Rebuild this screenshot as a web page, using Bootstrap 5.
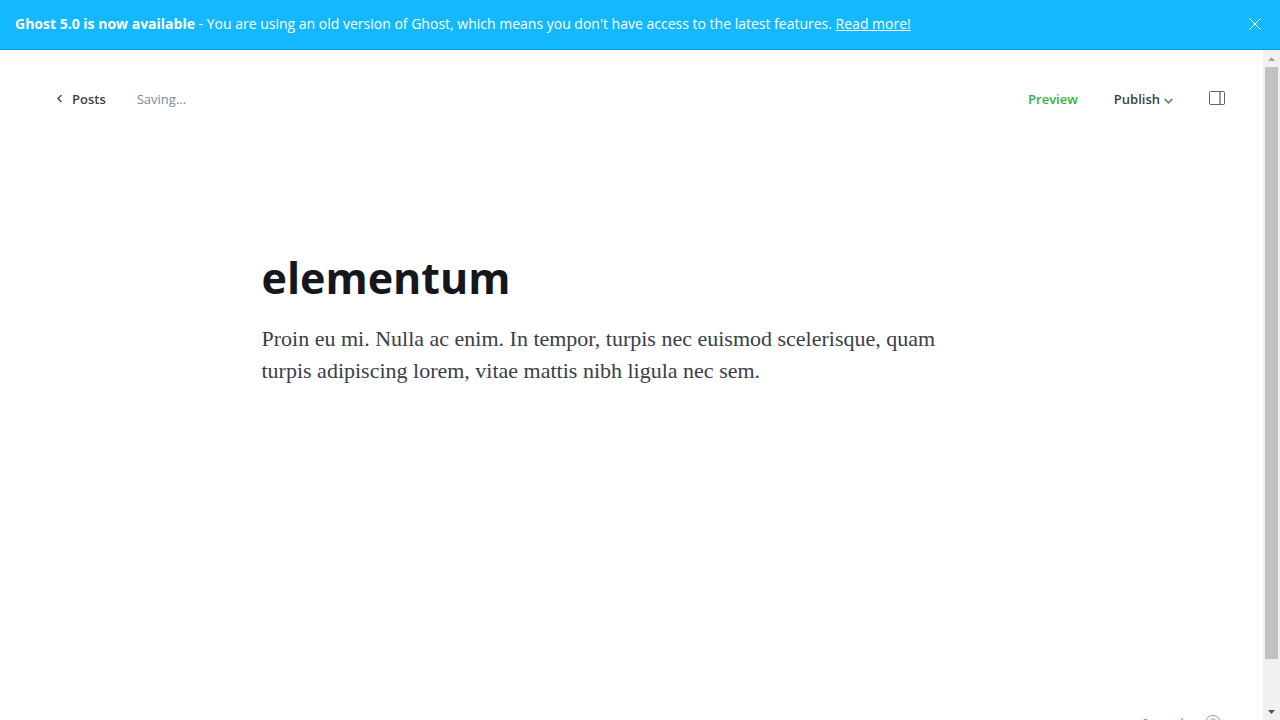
<!DOCTYPE html>
<html lang="en">
<head>
<meta charset="utf-8">
<meta name="viewport" content="width=device-width, initial-scale=1">
<title>Ghost editor</title>
<link href="https://cdn.jsdelivr.net/npm/bootstrap@5.3.0/dist/css/bootstrap.min.css" rel="stylesheet">
<style>
body { font-family: "Open Sans", "Noto Sans", sans-serif; font-size: 13px; line-height: 20px; color: #394047; }
.upgrade-banner { background: #14b8ff; border-bottom: 1px solid #0f9bd8; height: 50px; padding: 0 15px 2px; font-size: 14px; }
.plain-btn { background: none; border: 0; padding: 0; color: inherit; font-weight: 600; line-height: 20px; }
.workspace { min-height: 0; }
/* the canvas runs a little past the fold, so the word count is partly hidden */
.canvas { height: calc(100% + 13px); }
.editor-header { padding: 39px 38px 0 56px; }
.saving { color: #7c8b9a; margin-left: 31px; }
.preview { color: #30b43c; }
.editor-actions { gap: 36px; }
.editor-body { max-width: 740px; padding-top: 137px; }
.post-title { border: 0; padding: 0; outline: 0; background: none; font-size: 43px; line-height: 64px; font-weight: 700; color: #15171a; height: 64px; }
.post-text { font-family: "Liberation Serif", serif; font-size: 22px; line-height: 32px; margin-top: 13px; max-width: 700px; }
.word-count { color: #7c8b9a; gap: 15px; padding-right: 42px; }
.scroll-track { width: 17px; background: #f1f1f1; }
.scroll-thumb { background: #c1c1c1; width: 13px; flex: 592 0 0; }
.scroll-rest { flex: 44 0 0; }
.scroll-arrow { height: 17px; }
svg { display: block; }
</style>
</head>
<body>
<div class="vh-100 d-flex flex-column overflow-hidden">
  <aside class="upgrade-banner d-flex align-items-center justify-content-between text-white flex-shrink-0">
    <div><strong>Ghost 5.0 is now available</strong> - You are using an old version of Ghost, which means you don't have access to the latest features. <a href="#" class="text-white">Read more!</a></div>
    <button type="button" class="plain-btn px-1" aria-label="Close">
      <svg width="12" height="12" viewBox="0 0 12 12" fill="none" stroke="#fff" stroke-linecap="round"><path d="M.5.5l11 11M11.5.5l-11 11"/></svg>
    </button>
  </aside>
  <div class="workspace d-flex flex-grow-1 overflow-hidden">
    <div class="canvas d-flex flex-column flex-grow-1">
      <header class="editor-header d-flex justify-content-between">
        <div class="d-flex align-items-center">
          <a href="#" class="d-flex align-items-center text-reset text-decoration-none fw-semibold">
            <svg class="me-2" width="8" height="8" viewBox="0 0 8 8" fill="none" stroke="#394047" stroke-width="1.3"><path d="M5.5 0L2 3.500l3.500 3.500"/></svg>Posts</a>
          <span class="saving">Saving...</span>
        </div>
        <div class="editor-actions d-flex align-items-center">
          <button type="button" class="plain-btn preview">Preview</button>
          <button type="button" class="plain-btn d-flex align-items-center gap-1">Publish
            <svg class="mt-1" width="9" height="6" viewBox="0 0 9 6" fill="none" stroke="#6b747d" stroke-width="1.600"><path d="M.7 1L4.500 4.800 8.300 1"/></svg>
          </button>
          <button type="button" class="plain-btn" aria-label="Settings">
            <svg width="16" height="16" viewBox="0 0 16 16" fill="none" stroke="#5d666f"><rect x=".5" y=".5" width="15" height="13" rx="1"/><path d="M11 .5v13" stroke-width="1.300"/></svg>
          </button>
        </div>
      </header>
      <main class="editor-body w-100 mx-auto flex-grow-1">
        <input class="post-title w-100 d-block" type="text" aria-label="Post title" value="elementum">
        <p class="post-text mb-0">Proin eu mi. Nulla ac enim. In tempor, turpis nec euismod scelerisque, quam turpis adipiscing lorem, vitae mattis nibh ligula nec sem.</p>
      </main>
      <footer class="word-count d-flex justify-content-end align-items-center">
        <span>0 words</span>
        <a href="#" aria-label="Help">
          <svg width="16" height="16" viewBox="0 0 16 16" fill="none" stroke="#8e9aa6"><circle cx="8" cy="8" r="7.500"/><path d="M5.500 6.200a2.500 2.500 0 1 1 3.500 2.300q-1 .5-1 1.500M8 11.500v1"/></svg>
        </a>
      </footer>
    </div>
    <div class="scroll-track d-flex flex-column align-items-center flex-shrink-0" aria-hidden="true">
      <div class="scroll-arrow d-flex align-items-center"><svg width="7" height="4" viewBox="0 0 7 4" fill="#a3a3a3"><path d="M3.500 0L7 4H0z"/></svg></div>
      <div class="scroll-thumb"></div>
      <div class="scroll-rest"></div>
      <div class="scroll-arrow d-flex align-items-center"><svg width="7" height="4" viewBox="0 0 7 4" fill="#505050"><path d="M0 0h7L3.500 4z"/></svg></div>
    </div>
  </div>
</div>
<script src="https://cdn.jsdelivr.net/npm/bootstrap@5.3.0/dist/js/bootstrap.bundle.min.js"></script>
</body>
</html>
